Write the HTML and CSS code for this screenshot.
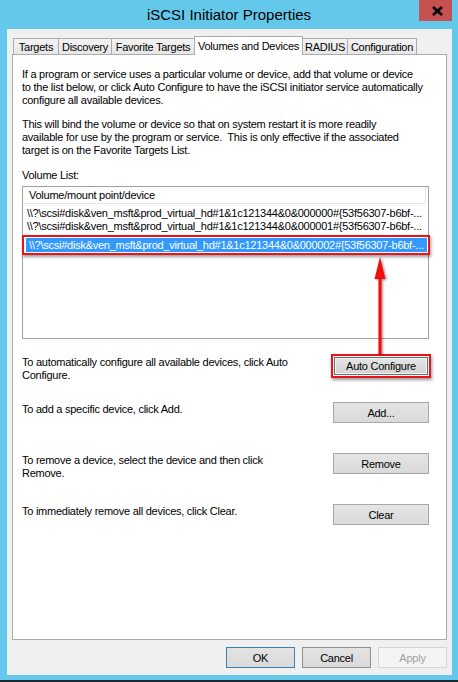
FILE: index.html
```html
<!DOCTYPE html>
<html>
<head>
<meta charset="utf-8">
<title>iSCSI Initiator Properties</title>
<link rel="stylesheet" href="styles.css">
</head>
<body>
<div class="window">
  <div class="titlebar">
    <div class="title">iSCSI Initiator Properties</div>
    <div class="close">
      <svg width="11" height="10" viewBox="0 0 11 10"><path d="M1 1 L10 9 M10 1 L1 9" stroke="#000" stroke-width="2.6" fill="none"/></svg>
    </div>
  </div>
  <div class="client">
    <div class="tabs">
      <div class="tab">Targets</div>
      <div class="tab">Discovery</div>
      <div class="tab">Favorite Targets</div>
      <div class="tab active">Volumes and Devices</div>
      <div class="tab">RADIUS</div>
      <div class="tab">Configuration</div>
    </div>
    <div class="panel">
      <p class="para">If a program or service uses a particular volume or device, add that volume or device<br>to the list below, or click Auto Configure to have the iSCSI initiator service automatically<br>configure all available devices.</p>
      <p class="para para2">This will bind the volume or device so that on system restart it is more readily<br>available for use by the program or service.&nbsp; This is only effective if the associated<br>target is on the Favorite Targets List.</p>
      <div class="label">Volume List:</div>
      <div class="list">
        <div class="list-header">Volume/mount point/device</div>
        <div class="row">\\?\scsi#disk&amp;ven_msft&amp;prod_virtual_hd#1&amp;1c121344&amp;0&amp;000000#{53f56307-b6bf-...</div>
        <div class="row">\\?\scsi#disk&amp;ven_msft&amp;prod_virtual_hd#1&amp;1c121344&amp;0&amp;000001#{53f56307-b6bf-...</div>
        <div class="callout-row">
          <div class="selected">\\?\scsi#disk&amp;ven_msft&amp;prod_virtual_hd#1&amp;1c121344&amp;0&amp;000002#{53f56307-b6bf-...</div>
        </div>
      </div>
      <div class="action action-auto">
        <div class="action-text">To automatically configure all available devices, click Auto<br>Configure.</div>
        <div class="callout-btn"><div class="btn-hl">Auto Configure</div></div>
      </div>
      <div class="action">
        <div class="action-text">To add a specific device, click Add.</div>
        <div class="btn">Add...</div>
      </div>
      <div class="action">
        <div class="action-text">To remove a device, select the device and then click<br>Remove.</div>
        <div class="btn">Remove</div>
      </div>
      <div class="action action-last">
        <div class="action-text">To immediately remove all devices, click Clear.</div>
        <div class="btn">Clear</div>
      </div>
    </div>
    <div class="footer">
      <div class="fbtn default">OK</div>
      <div class="fbtn">Cancel</div>
      <div class="fbtn disabled">Apply</div>
    </div>
  </div>
  <svg class="arrow" width="458" height="682" viewBox="0 0 458 682">
    <defs>
      <filter id="sh" x="-50%" y="-10%" width="200%" height="120%">
        <feDropShadow dx="1.2" dy="1" stdDeviation="0.8" flood-color="#000" flood-opacity="0.45"/>
      </filter>
    </defs>
    <g filter="url(#sh)">
      <line x1="380" y1="276" x2="380" y2="354" stroke="#f20d0d" stroke-width="3"/>
      <polygon points="380,257 374.5,279 385.5,279" fill="#f20d0d"/>
    </g>
  </svg>
</div>
</body>
</html>
```
FILE: styles.css
```css
html, body {
  margin: 0;
  padding: 0;
  background: #63c8ea;
}
body {
  font-family: "Liberation Sans", Arial, sans-serif;
  font-size: 11px;
  letter-spacing: -0.25px;
  color: #000;
}
.window {
  position: relative;
  width: 458px;
  height: 682px;
  box-sizing: border-box;
  background: #63c8ea;
  border-bottom: 2px solid #1c2a32;
  display: flex;
  flex-direction: column;
}
.titlebar {
  height: 29px;
  flex: none;
  display: grid;
  grid-template-columns: 1fr auto 1fr;
  align-items: start;
}
.title {
  grid-column: 2;
  font-size: 15px;
  letter-spacing: 0;
  line-height: 29px;
  color: #000;
}
.close {
  grid-column: 3;
  justify-self: end;
  width: 33px;
  height: 21px;
  margin-right: 6px;
  background: #c75050;
  display: flex;
  align-items: center;
  justify-content: center;
  padding-left: 3px;
  box-sizing: border-box;
}
.client {
  flex: 1;
  margin: 0 6px 5px 7px;
  background: #f0f0f0;
  padding: 7px 5px 7px 5px;
  display: flex;
  flex-direction: column;
}
.tabs {
  display: grid;
  grid-template-columns: 45px 53px 83px 109px 44px 70px;
  height: 18px;
  margin-left: 1px;
  align-items: end;
  position: relative;
  z-index: 1;
  flex: none;
}
.tab {
  height: 16px;
  box-sizing: border-box;
  border: 1px solid #acacac;
  border-bottom: none;
  border-right: none;
  background: linear-gradient(#f3f3f3, #e6e6e6);
  display: flex;
  align-items: center;
  justify-content: center;
  white-space: nowrap;
}
.tab:last-child {
  border-right: 1px solid #acacac;
}
.tab.active {
  height: 19px;
  margin-bottom: -1px;
  background: #fff;
  border-right: 1px solid #acacac;
  padding-bottom: 1px;
}
.tab.active + .tab {
  border-left: none;
}
.panel {
  flex: 1;
  background: #fff;
  border: 1px solid #acacac;
  padding: 13px 17px 0 9px;
}
.para {
  margin: 0 0 11px;
  line-height: 13px;
  white-space: nowrap;
}
.para2 {
  margin-bottom: 12px;
}
.label {
  line-height: 13px;
  margin-bottom: 4px;
}
.list {
  height: 153px;
  box-sizing: border-box;
  border: 1px solid #a0a0a0;
}
.list-header {
  width: 403px;
  height: 17px;
  box-sizing: border-box;
  line-height: 16px;
  padding-left: 6px;
  border-bottom: 1px solid #e5e5e5;
  border-right: 1px solid #e5e5e5;
  margin-bottom: 3px;
}
.row {
  line-height: 13px;
  padding-left: 4px;
  white-space: nowrap;
}
.callout-row {
  position: relative;
  margin: 2px 0 0 -1px;
  width: 408px;
  box-sizing: border-box;
  border: 2px solid #e8141c;
  padding: 1px 1px 1px 2px;
  background: #fff;
  box-shadow: 1px 2px 3px rgba(0, 0, 0, 0.4);
}
.selected {
  background: #3399ff;
  color: #fff;
  line-height: 14px;
  padding-left: 3px;
  white-space: nowrap;
}
.action {
  display: grid;
  grid-template-columns: 1fr 96px;
  align-items: start;
  height: 51px;
}
.action-auto {
  margin-top: 15px;
  height: 48px;
}
.action-last {
  height: 21px;
}
.action-text {
  line-height: 13px;
  padding-top: 1px;
}
.action-auto .action-text {
  padding-top: 2px;
}
.btn {
  height: 21px;
  box-sizing: border-box;
  border: 1px solid #a8a8a8;
  background: linear-gradient(#e4e4e4, #dadada);
  display: flex;
  align-items: center;
  justify-content: center;
}
.callout-btn {
  justify-self: end;
  width: 100px;
  height: 24px;
  margin-right: -2px;
  box-sizing: border-box;
  border: 2px solid #e8141c;
  padding: 1px;
  background: #f4f4f4;
  box-shadow: 1px 2px 3px rgba(0, 0, 0, 0.4);
  position: relative;
}
.btn-hl {
  height: 18px;
  box-sizing: border-box;
  border: 1px solid #6e6e6e;
  background: linear-gradient(#e6e6e6, #d2d2d2);
  box-shadow: inset 0 0 0 1px #f2f2f2;
  display: flex;
  align-items: center;
  justify-content: center;
}
.footer {
  flex: none;
  display: flex;
  justify-content: flex-end;
  gap: 7px;
  margin-top: 7px;
}
.fbtn {
  width: 69px;
  height: 21px;
  box-sizing: border-box;
  border: 1px solid #8f8f8f;
  background: linear-gradient(#e3e3e3, #dadada);
  display: flex;
  align-items: center;
  justify-content: center;
}
.fbtn.default {
  border-color: #3c7fb1;
}
.fbtn.disabled {
  border-color: #d5d5d5;
  background: #f4f4f4;
  color: #a0a0a0;
}
.arrow {
  position: absolute;
  left: 0;
  top: 0;
  pointer-events: none;
}
```
